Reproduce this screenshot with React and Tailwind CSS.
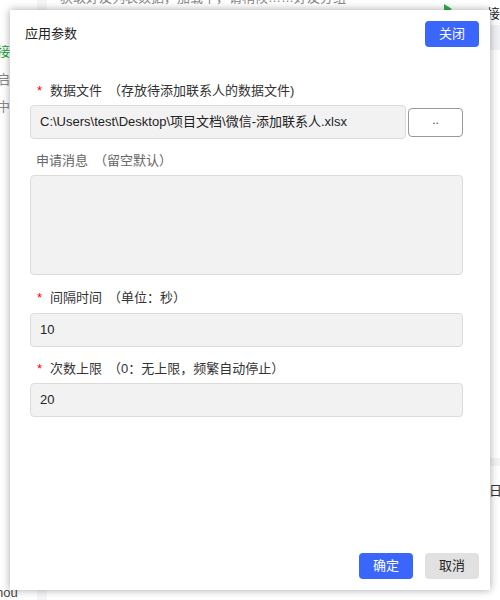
const font = { fontFamily: '"Liberation Sans", "Noto Sans CJK SC", sans-serif' }

function Label({ required, text, note, muted }) {
    return (
        <div className={`flex items-center h-4 text-[13px] leading-4 ${muted ? 'text-[#666]' : 'text-[#333]'}`}>
            {required && <span className="text-[#ff0000] w-[14px] pl-[1px]">*</span>}
            <span>{text}</span>
            <span className="ml-[6px]">{note}</span>
        </div>
    )
}

function Field({ value }) {
    return (
        <div className="h-[34px] flex items-center px-[9px] bg-[#f2f2f2] border border-[#dcdcdc] rounded-[4px] text-[13px] text-[#222]">
            {value}
        </div>
    )
}

export default function App() {
    return (
        <div className="relative w-[500px] h-[600px] overflow-hidden bg-white" style={font}>
            {/* stuff behind the dialog */}
            <div className="absolute left-[37px] top-0 w-[10px] h-[600px] bg-[#f6f6f8]" />
            <div className="absolute left-[490px] top-[25px] w-[10px] h-[25px] bg-[#f0f1f4]" />
            <div className="absolute left-[490px] top-[458px] w-[10px] h-[8px] bg-[#f3f3f3]" />
            <div className="absolute left-[60px] top-[-12px] text-[13px] text-[#888] whitespace-nowrap">获取好友列表数据，加载中，请稍候……好友分组</div>
            <div className="absolute left-[444px] top-[4px] w-0 h-0 border-y-[5px] border-y-transparent border-l-[8px] border-l-[#2bb24c]" />
            <div className="absolute left-[487px] top-[4px] text-[13px] text-[#222]">接</div>
            <div className="absolute left-[-3px] top-[42px] text-[13px] text-[#1a9a2a]">接</div>
            <div className="absolute left-[-3px] top-[70px] text-[13px] text-[#888]">启</div>
            <div className="absolute left-[-3px] top-[97px] text-[13px] text-[#888]">中</div>
            <div className="absolute left-[-4px] top-[583px] text-[13px] text-[#444]">hou</div>
            <div className="absolute left-[489px] top-[481px] text-[13px] text-[#333]">日</div>

            {/* dialog */}
            <div className="absolute left-[10px] top-[10px] w-[480px] h-[580px] bg-white shadow-[0_0_8px_rgba(0,0,0,0.35)] flex flex-col">
                <div className="flex items-center justify-between pl-[15px] pr-[11px] pt-[11px]">
                    <span className="text-[13px] text-[#222]">应用参数</span>
                    <button className="w-[54px] h-[26px] rounded-[4px] bg-[#3a66fb] text-white text-[13px]">关闭</button>
                </div>

                <div className="flex flex-col pl-[20px] pr-[27px] mt-[36px]">
                    <div className="pl-[6px]">
                        <Label required text="数据文件" note="（存放待添加联系人的数据文件)" />
                    </div>
                    <div className="flex items-center gap-[2px] mt-[6px]">
                        <div className="flex-1">
                            <Field value="C:\Users\test\Desktop\项目文档\微信-添加联系人.xlsx" />
                        </div>
                        <button className="w-[55px] h-[29px] bg-white border border-[#999] rounded-[4px] text-[12px] text-[#444] leading-none pb-[4px]">..</button>
                    </div>

                    <div className="pl-[6px] mt-[14px]">
                        <Label muted text="申请消息" note="（留空默认）" />
                    </div>
                    <div className="mt-[6px] h-[100px] bg-[#f2f2f2] border border-[#dcdcdc] rounded-[4px]" />

                    <div className="pl-[6px] mt-[15px]">
                        <Label required text="间隔时间" note="（单位：秒）" />
                    </div>
                    <div className="mt-[7px]">
                        <Field value="10" />
                    </div>

                    <div className="pl-[6px] mt-[14px]">
                        <Label required text="次数上限" note="（0：无上限，频繁自动停止）" />
                    </div>
                    <div className="mt-[6px]">
                        <Field value="20" />
                    </div>
                </div>

                <div className="mt-auto flex justify-end gap-[12px] pr-[11px] pb-[11px]">
                    <button className="w-[54px] h-[26px] rounded-[4px] bg-[#3a66fb] text-white text-[13px]">确定</button>
                    <button className="w-[54px] h-[26px] rounded-[4px] bg-[#e1e1e1] text-[#222] text-[13px]">取消</button>
                </div>
            </div>
        </div>
    )
}
